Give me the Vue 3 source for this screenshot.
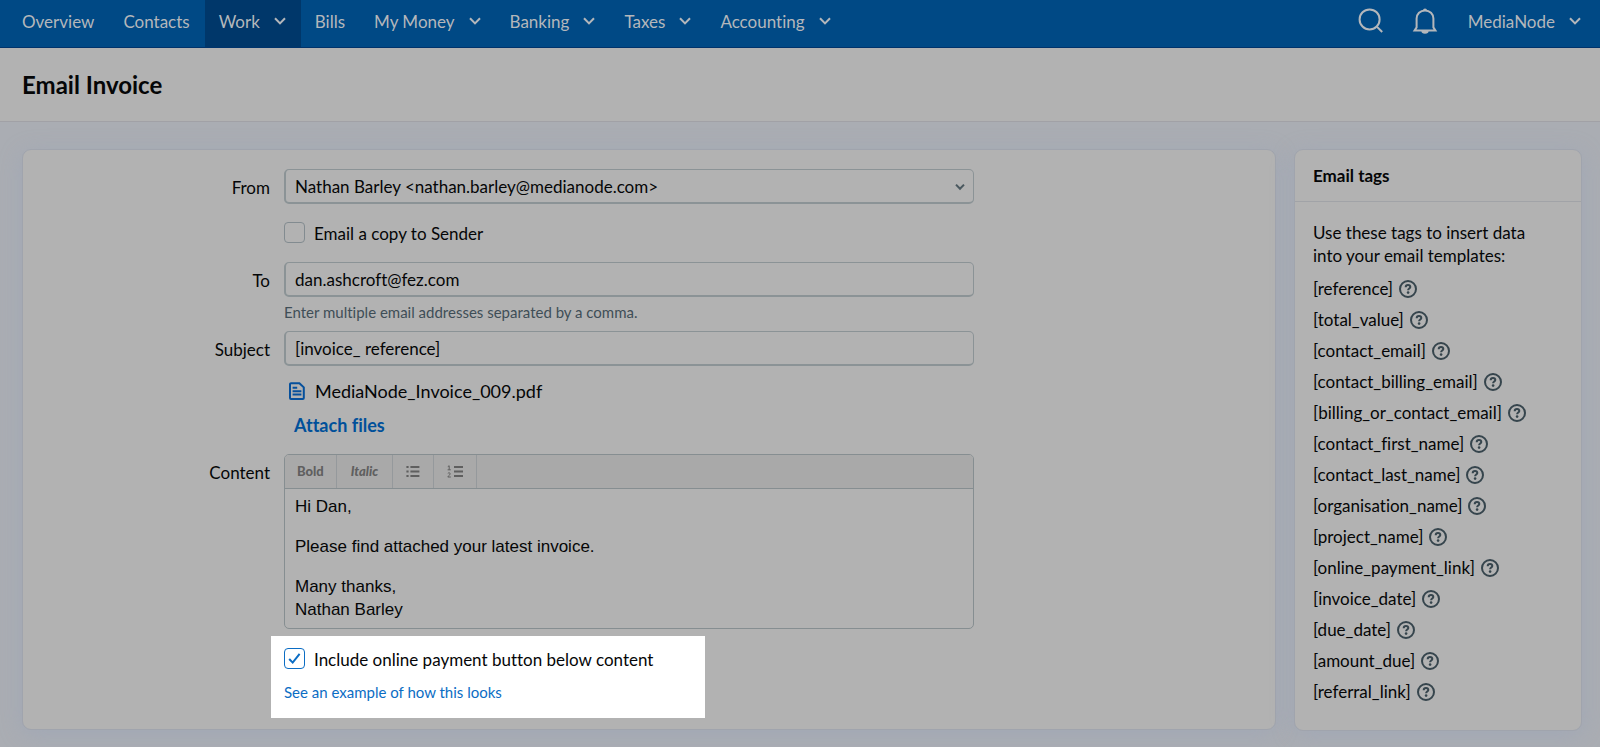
<script setup>
import { ref } from 'vue'

const nav = [
  { label: 'Overview' },
  { label: 'Contacts' },
  { label: 'Work', menu: true, active: true },
  { label: 'Bills' },
  { label: 'My Money', menu: true },
  { label: 'Banking', menu: true },
  { label: 'Taxes', menu: true },
  { label: 'Accounting', menu: true },
]

const tags = [
  'reference',
  'total_value',
  'contact_email',
  'contact_billing_email',
  'billing_or_contact_email',
  'contact_first_name',
  'contact_last_name',
  'organisation_name',
  'project_name',
  'online_payment_link',
  'invoice_date',
  'due_date',
  'amount_due',
  'referral_link',
]

const from = ref('Nathan Barley <nathan.barley@medianode.com>')
const copySender = ref(false)
const to = ref('dan.ashcroft@fez.com')
const subject = ref('[invoice_ reference]')
const includeButton = ref(true)
</script>

<template>
  <div class="page">
    <header class="topbar">
      <nav class="nav" aria-label="Main">
        <template v-for="item in nav" :key="item.label">
          <button v-if="item.menu" type="button" class="nav-item" :class="{ active: item.active }">
            {{ item.label }}
            <svg class="chevron" viewBox="0 0 12 8" aria-hidden="true"><path d="M1 1.2 6 6.4 11 1.2" /></svg>
          </button>
          <a v-else href="#" class="nav-item">{{ item.label }}</a>
        </template>
      </nav>
      <div class="tools">
        <button type="button" class="tool" aria-label="Search">
          <svg viewBox="0 0 26 26" aria-hidden="true">
            <circle cx="11.6" cy="11.4" r="10" />
            <path d="m18.8 18.6 5.4 5.4" />
          </svg>
        </button>
        <button type="button" class="tool" aria-label="Notifications">
          <svg viewBox="0 0 26 26" aria-hidden="true">
            <path d="M2.6 22.4H23.4L21.4 19.4V10.6C21.4 6 17.8 2.4 13 2.4S4.6 6 4.6 10.6V19.4L2.6 22.4Z" />
            <path class="solid" d="M11 2.4a2 2 0 0 1 4 0ZM9.4 23h7.2a3.6 2.8 0 0 1-7.2 0Z" />
          </svg>
        </button>
        <button type="button" class="nav-item account">
          MediaNode
          <svg class="chevron" viewBox="0 0 12 8" aria-hidden="true"><path d="M1 1.2 6 6.4 11 1.2" /></svg>
        </button>
      </div>
    </header>

    <div class="title-bar">
      <h1>Email Invoice</h1>
    </div>

    <div class="workspace">
      <main class="panel main">
        <form class="form" @submit.prevent>
          <label class="label" for="from">From</label>
          <div class="field">
            <div class="select-wrap">
              <select id="from" v-model="from" class="control">
                <option>{{ from }}</option>
              </select>
              <svg class="select-arrow" viewBox="0 0 10 8" aria-hidden="true"><path d="M1 1.6 5 5.8 9 1.6" /></svg>
            </div>
            <label class="check copy">
              <input v-model="copySender" type="checkbox" />
              <span>Email a copy to Sender</span>
            </label>
          </div>

          <label class="label" for="to">To</label>
          <div class="field">
            <input id="to" v-model="to" class="control" type="text" />
            <p class="hint">Enter multiple email addresses separated by a comma.</p>
          </div>

          <label class="label" for="subject">Subject</label>
          <div class="field">
            <input id="subject" v-model="subject" class="control" type="text" />
            <div class="file">
              <svg viewBox="0 0 16 18" aria-hidden="true">
                <path d="M2 1.2H10.4L14.8 5.4V16a1 1 0 0 1-1 1H2a1 1 0 0 1-1-1V2.2a1 1 0 0 1 1-1Z" />
                <path d="M3.6 5.8h4.6M3.6 9.2h8.8M3.6 12.6h8.8" />
              </svg>
              <span>MediaNode_Invoice_009.pdf</span>
            </div>
            <button type="button" class="attach">Attach files</button>
          </div>

          <span id="content-label" class="label">Content</span>
          <div class="field">
            <div class="editor">
              <div class="toolbar">
                <button type="button" class="fmt bold">Bold</button>
                <button type="button" class="fmt italic">Italic</button>
                <button type="button" class="fmt" aria-label="Bulleted list">
                  <svg viewBox="0 0 14 13" aria-hidden="true">
                    <path d="M4.4 2h9M4.4 6.5h9M4.4 11h9" />
                    <path d="M.4 2h2.2M.4 6.5h2.2M.4 11h2.2" />
                  </svg>
                </button>
                <button type="button" class="fmt" aria-label="Numbered list">
                  <svg class="numbered" viewBox="0 0 16 13" aria-hidden="true">
                    <path d="M7 2h9M7 6.5h9M7 11h9" />
                    <path class="thin" d="M.8 1.6 2.2.8V4.8M.6 4.8h3.2M.8 8.4c1-1 2.6-.6 2.4.6C3 10 1 11 .8 12h3" />
                  </svg>
                </button>
              </div>
              <div class="content" contenteditable="true" role="textbox" aria-multiline="true" aria-labelledby="content-label">
                <p>Hi Dan,</p>
                <p>Please find attached your latest invoice.</p>
                <p>Many thanks,<br />Nathan Barley</p>
              </div>
            </div>
            <div class="spotlight">
              <label class="check">
                <input v-model="includeButton" type="checkbox" />
                <svg v-if="includeButton" class="tick" viewBox="0 0 21 21" aria-hidden="true"><path d="m5.2 11 3.5 3.6L15.6 5.8" /></svg>
                <span>Include online payment button below content</span>
              </label>
              <a href="#" class="example">See an example of how this looks</a>
            </div>
          </div>
        </form>
      </main>

      <aside class="panel side">
        <h2>Email tags</h2>
        <div class="side-body">
          <p>Use these tags to insert data into your email templates:</p>
          <ul>
            <li v-for="tag in tags" :key="tag">
              <span>[{{ tag }}]</span>
              <button type="button" class="help" :aria-label="'About ' + tag">
                <svg viewBox="0 0 18 18" aria-hidden="true">
                  <circle cx="9" cy="9" r="8" />
                  <path d="M6.7 7.2C6.7 5.8 7.8 5 9 5s2.3.8 2.3 2c0 1.5-2.2 1.6-2.2 3.2" />
                  <circle class="dot" cx="9.1" cy="12.6" r="1.3" />
                </svg>
              </button>
            </li>
          </ul>
        </div>
      </aside>
    </div>
  </div>
</template>

<style>
body {
  margin: 0;
  background: #aaadb4;
}
</style>

<style scoped>
* {
  box-sizing: border-box;
}

.page {
  min-height: 100vh;
  font-family: Lato, "Liberation Sans", sans-serif;
  font-size: 17px;
  font-variant-ligatures: none;
  line-height: 23px;
  color: #050607;
  background: #aaadb3;
}

button,
input,
select {
  font: inherit;
  color: inherit;
}

button {
  padding: 0;
  border: 0;
  background: none;
  cursor: pointer;
}

p,
h1,
h2,
ul {
  margin: 0;
  padding: 0;
}

svg {
  display: block;
  flex: none;
  fill: none;
  stroke: currentColor;
  stroke-width: 2;
}

/* Top navigation */
.topbar {
  display: flex;
  justify-content: space-between;
  height: 48px;
  padding: 0 4px 0 8px;
  color: #b4b7bb;
  background: #004985;
  border-bottom: 1px solid #00336b;
}

.nav,
.tools {
  display: flex;
}

.nav-item {
  display: flex;
  align-items: center;
  gap: 14px;
  padding: 0 15px 5px 14px;
  color: inherit;
  text-decoration: none;
  white-space: nowrap;
}

.nav-item.active {
  background: #00376a;
}

.account {
  margin-left: 2px;
}

.chevron {
  width: 12px;
  height: 8px;
}

.tool {
  padding: 0 14px 5px;
}

.tool svg {
  width: 26px;
  height: 26px;
}

.solid {
  fill: currentColor;
  stroke: none;
}

/* Page title */
.title-bar {
  padding: 22px 22px 21px;
  background: #b2b2b2;
  border-bottom: 1px solid #a1a1a6;
}

h1 {
  font-size: 24px;
  line-height: 30px;
  font-weight: 700;
}

/* Panels */
.workspace {
  display: flex;
  align-items: flex-start;
  gap: 18px;
  padding: 27px 18px 15px 22px;
}

.panel {
  background: #b2b2b2;
  border: 1px solid #a0a4ad;
  border-radius: 9px;
  box-shadow: 0 4px 22px rgba(148, 160, 188, 0.4);
}

.main {
  flex: 1;
  min-width: 0;
  padding: 19px 0 11px;
}

.form {
  display: grid;
  grid-template-columns: 247px minmax(0, 690px);
  column-gap: 14px;
}

.label {
  line-height: 37px;
  text-align: right;
}

.control {
  display: block;
  width: 100%;
  height: 35px;
  padding: 0 9px;
  border: 2px solid #8b9396;
  border-width: 1px 1px 2px 2px;
  border-radius: 5px;
  background: transparent;
  appearance: none;
  outline: none;
}

.select-wrap {
  position: relative;
}

.select-arrow {
  position: absolute;
  top: 14px;
  right: 9px;
  width: 10px;
  height: 8px;
  color: #4a585f;
}

.check {
  position: relative;
  display: flex;
  align-items: center;
  gap: 9px;
  height: 21px;
}

.check span {
  padding-top: 2px;
}

.check input {
  flex: none;
  width: 21px;
  height: 21px;
  margin: 0;
  border: 1px solid #828b90;
  border-radius: 4px;
  appearance: none;
}

.copy {
  margin: 18px 0 19px;
}

.hint {
  margin: 4px 0 8px;
  font-size: 15px;
  line-height: 22px;
  color: #3f4e57;
}

.file {
  display: flex;
  align-items: center;
  gap: 10px;
  margin-top: 13px;
  padding-left: 5px;
  font-size: 18px;
  line-height: 24px;
}

.file svg {
  width: 16px;
  height: 18px;
  color: #06509c;
}

.attach {
  display: block;
  margin: 10px 0 17px 10px;
  font-size: 18px;
  font-weight: 700;
  line-height: 24px;
  color: #00509a;
}

/* Rich text editor */
.editor {
  border: 1px solid #868e91;
  border-radius: 5px;
  overflow: hidden;
}

.toolbar {
  display: flex;
  height: 34px;
  background: #a9a9a9;
  border-bottom: 1px solid #868e91;
}

.fmt {
  padding: 0 13px;
  font-size: 13px;
  font-weight: 900;
  color: #5f5f5f;
  border-right: 1px solid #95999c;
}

.fmt.bold {
  padding: 0 12px;
}

.fmt.italic {
  padding: 0 14px;
  font-style: italic;
}

.fmt svg {
  width: 14px;
  height: 13px;
}

.fmt svg.numbered {
  width: 16px;
}

.thin {
  stroke-width: 1;
}

.content {
  padding: 6px 10px 7px;
  font-family: "Liberation Sans", Arial, sans-serif;
  outline: none;
}

.content p + p {
  margin-top: 17px;
}

/* Highlighted option */
.spotlight {
  width: 434px;
  margin: 7px 0 0 -13px;
  padding: 12px 13px 15px;
  background: #fff;
}

.spotlight .check input {
  border-color: #0b6dc4;
}

.tick {
  position: absolute;
  top: 0;
  left: 0;
  width: 21px;
  height: 21px;
  color: #0b6dc4;
}

.example {
  display: block;
  margin-top: 12px;
  font-size: 15px;
  line-height: 22px;
  color: #0b6dc4;
  text-decoration: none;
}

/* Email tags */
.side {
  width: 288px;
  flex: none;
}

h2 {
  padding: 14px 18px;
  font-size: 17px;
  line-height: 23px;
  font-weight: 700;
  border-bottom: 1px solid #a1a3a7;
}

.side-body {
  padding: 19px 18px 23px;
}

.side-body p {
  max-width: 236px;
}

ul {
  margin-top: 6px;
  list-style: none;
}

li {
  display: flex;
  align-items: center;
  gap: 6px;
  height: 31px;
}

.help {
  color: #36454d;
}

.help svg {
  width: 18px;
  height: 18px;
}

.dot {
  fill: currentColor;
  stroke: none;
}
</style>
